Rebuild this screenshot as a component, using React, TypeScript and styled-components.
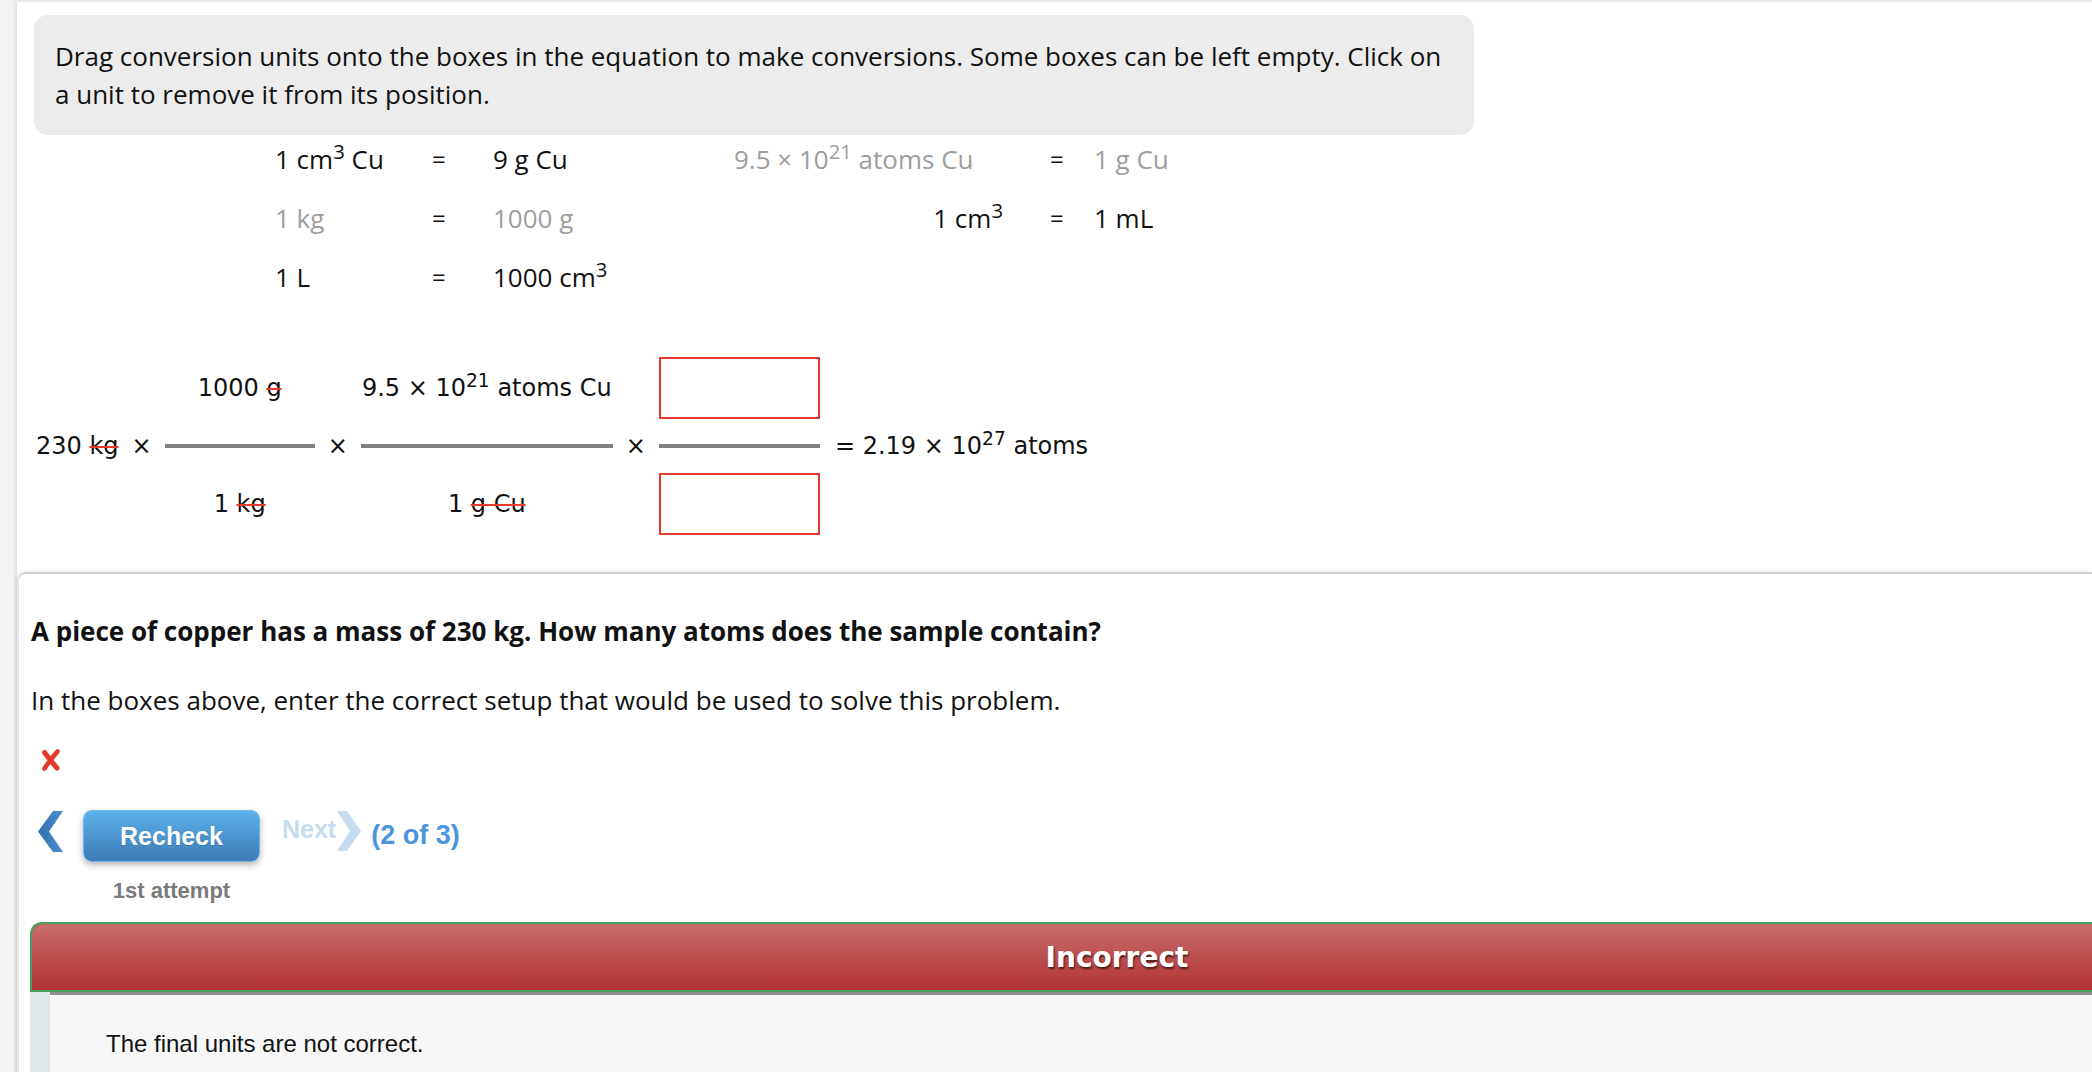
import React from "react";
import styled, { createGlobalStyle } from "styled-components";

const Global = createGlobalStyle`
  html, body { margin: 0; padding: 0; overflow: hidden; background: #f3f3f3; }
  #root { min-height: 100vh; }
`;

const Page = styled.div`
  display: flex;
  min-height: 1072px;
  background: #f3f3f3;
`;

const Gutter = styled.div`
  width: 17px;
  flex: none;
`;

const Main = styled.main`
  flex: 1;
  min-width: 0;
  display: flex;
  flex-direction: column;
  background: #fff;
  border-top: 2px solid #e6e6e6;
  box-shadow: -2px 0 3px rgba(0, 0, 0, 0.08);
`;

const Instructions = styled.div`
  box-sizing: border-box;
  width: 1440px;
  margin: 13px 0 0 17px;
  padding: 22px 21px;
  background: #ececec;
  border-radius: 14px;
  font: 400 26px/38px "Open Sans", sans-serif;
  color: #111;
`;

const UnitGrid = styled.div`
  display: grid;
  grid-template-columns: 157px 61px 241px 269px 47px 44px auto;
  grid-auto-rows: 40px;
  row-gap: 19px;
  margin: 4px 0 0 258px;
  font: 400 26px/40px "Open Sans", sans-serif;
  white-space: nowrap;
`;

const Unit = styled.span<{ $used?: boolean; $end?: boolean }>`
  color: ${(p) => (p.$used ? "#9d9d9d" : "#111")};
  justify-self: ${(p) => (p.$end ? "end" : "start")};
`;

const Eq = styled.span`
  color: #111;
  font-size: 24px;
`;

const Sup = styled.sup`
  font-size: 0.78em;
  line-height: 0;
  vertical-align: 0.5em;
`;

const Equation = styled.div`
  display: flex;
  align-items: center;
  gap: 13px;
  margin: 60px 0 0 19px;
  font: 400 24px "DejaVu Sans", Verdana, sans-serif;
  color: #111;
  white-space: nowrap;
`;

const Term = styled.span<{ $lead?: number }>`
  margin-left: ${(p) => p.$lead ?? 0}px;
`;

const Fraction = styled.div<{ $w: number }>`
  width: ${(p) => p.$w}px;
  flex: none;
  display: flex;
  flex-direction: column;
  align-items: center;
`;

const Slot = styled.div`
  height: 62px;
  width: 100%;
  line-height: 62px;
  text-align: center;
`;

const Bar = styled.div`
  align-self: stretch;
  height: 4px;
  margin: 25px 0;
  background: #808080;
`;

const DropBox = styled.div`
  box-sizing: border-box;
  width: 100%;
  height: 62px;
  border: 2px solid #e53b2c;
`;

const Strike = styled.span`
  text-decoration: line-through;
  text-decoration-color: #e8392b;
  text-decoration-thickness: 2px;
`;

const Panel = styled.section`
  flex: 1;
  margin: 37px 0 0 2px;
  background: #fff;
  border-top: 2px solid #d2d2d2;
  border-top-left-radius: 8px;
  box-shadow: -2px 0 4px rgba(0, 0, 0, 0.14);
  padding-top: 41px;
`;

const PanelBody = styled.div`
  padding-left: 12px;
  display: flex;
  flex-direction: column;
  align-items: flex-start;
`;

const Question = styled.p`
  margin: 0;
  font: 700 26px/33px "Open Sans", sans-serif;
  color: #111;
`;

const Prompt = styled.p`
  margin: 36px 0 0;
  font: 400 26px/33px "Open Sans", sans-serif;
  color: #111;
`;

const WrongMark = styled.svg`
  margin: 31px 0 0 9px;
  display: block;
`;

const NavRow = styled.div`
  display: flex;
  align-items: flex-start;
  margin-top: 38px;
  padding-left: 7px;
  font-family: "Liberation Sans", Arial, sans-serif;
  font-weight: 700;
`;

const Chevron = styled.svg<{ $gap?: number }>`
  display: block;
  flex: none;
  margin-top: 1px;
  margin-right: ${(p) => p.$gap ?? 0}px;
`;

const ButtonStack = styled.div`
  display: flex;
  flex-direction: column;
  align-items: center;
  width: 177px;
`;

const RecheckButton = styled.button`
  box-sizing: border-box;
  width: 177px;
  height: 52px;
  border: 1px solid #6db8ea;
  border-radius: 9px;
  background: linear-gradient(#5cb1ea, #3c7ab6);
  box-shadow: 0 3px 6px rgba(0, 0, 0, 0.3);
  color: #fff;
  font: 700 25px "Liberation Sans", Arial, sans-serif;
  text-shadow: 0 1px 1px rgba(0, 0, 0, 0.15);
  padding: 0;
  cursor: pointer;
`;

const Caption = styled.div`
  margin-top: 16px;
  font: 700 22px "Liberation Sans", Arial, sans-serif;
  color: #7a7a7a;
`;

const NextLabel = styled.span`
  margin: 5px 1px 0 22px;
  font-size: 25px;
  color: #c5dbef;
`;

const Counter = styled.span`
  margin: 10px 0 0 10px;
  font-size: 27px;
  color: #4b95dc;
`;

const Feedback = styled.div`
  width: 2172px;
  margin: 18px 0 0 11px;
`;

const FeedbackHeader = styled.div`
  box-sizing: border-box;
  height: 70px;
  display: flex;
  align-items: center;
  justify-content: center;
  border: 2px solid #4a9d58;
  border-right: none;
  border-top-left-radius: 12px;
  background: linear-gradient(#c76d6d, #b13232);
  color: #fff;
  font: 700 28px "DejaVu Sans", Verdana, sans-serif;
  text-shadow: 1px 2px 2px rgba(0, 0, 0, 0.6);
`;

const FeedbackBody = styled.div`
  display: flex;
  min-height: 120px;
`;

const FeedbackStrip = styled.div`
  width: 20px;
  flex: none;
  background: #dfe6ea;
`;

const FeedbackText = styled.div`
  flex: 1;
  background: #f7f7f7;
  border-top: 3px solid #8e8e8e;
  padding: 35px 0 0 56px;
  font: 400 24px "Liberation Sans", Arial, sans-serif;
  color: #111;
`;

export default function App() {
  return (
    <>
      <Global />
      <Page>
        <Gutter />
        <Main>
          <Instructions>
            Drag conversion units onto the boxes in the equation to make conversions. Some boxes can be left empty. Click on a
            unit to remove it from its position.
          </Instructions>

          <UnitGrid>
            <Unit>1 cm<Sup>3</Sup> Cu</Unit>
            <Eq>=</Eq>
            <Unit>9 g Cu</Unit>
            <Unit $used>9.5 × 10<Sup>21</Sup> atoms Cu</Unit>
            <span />
            <Eq>=</Eq>
            <Unit $used>1 g Cu</Unit>

            <Unit $used>1 kg</Unit>
            <Eq>=</Eq>
            <Unit $used>1000 g</Unit>
            <Unit $end>1 cm<Sup>3</Sup></Unit>
            <span />
            <Eq>=</Eq>
            <Unit>1 mL</Unit>

            <Unit>1 L</Unit>
            <Eq>=</Eq>
            <Unit>1000 cm<Sup>3</Sup></Unit>
          </UnitGrid>

          <Equation>
            <Term>
              230 <Strike>kg</Strike>
            </Term>
            <Term>×</Term>
            <Fraction $w={150}>
              <Slot>
                1000 <Strike>g</Strike>
              </Slot>
              <Bar />
              <Slot>
                1 <Strike>kg</Strike>
              </Slot>
            </Fraction>
            <Term>×</Term>
            <Fraction $w={252}>
              <Slot>
                9.5 × 10<Sup>21</Sup> atoms Cu
              </Slot>
              <Bar />
              <Slot>
                1 <Strike>g Cu</Strike>
              </Slot>
            </Fraction>
            <Term>×</Term>
            <Fraction $w={161}>
              <DropBox />
              <Bar />
              <DropBox />
            </Fraction>
            <Term $lead={2}>
              = 2.19 × 10<Sup>27</Sup> atoms
            </Term>
          </Equation>

          <Panel>
            <PanelBody>
              <Question>A piece of copper has a mass of 230 kg. How many atoms does the sample contain?</Question>
              <Prompt>In the boxes above, enter the correct setup that would be used to solve this problem.</Prompt>
              <WrongMark width="22" height="24" viewBox="0 0 22 24">
                <path d="M4.5 4.5 Q10 12 17 20" stroke="#e53a2a" strokeWidth="5" strokeLinecap="round" fill="none" />
                <path d="M17.5 3.5 Q10.5 11.5 4.5 20.5" stroke="#e53a2a" strokeWidth="4.6" strokeLinecap="round" fill="none" />
              </WrongMark>
              <NavRow>
                <Chevron $gap={20} width="25" height="41" viewBox="0 0 25 41">
                  <defs>
                    <linearGradient id="backG" x1="0" y1="0" x2="1" y2="0">
                      <stop offset="0" stopColor="#2f6eae" />
                      <stop offset="1" stopColor="#4b8fd0" />
                    </linearGradient>
                  </defs>
                  <polygon points="15,0 25,0 11,20.5 25,41 15,41 0,20.5" fill="url(#backG)" />
                </Chevron>
                <ButtonStack>
                  <RecheckButton>Recheck</RecheckButton>
                  <Caption>1st attempt</Caption>
                </ButtonStack>
                <NextLabel>Next</NextLabel>
                <Chevron width="24" height="40" viewBox="0 0 24 40">
                  <polygon points="0,0 10,0 24,20 10,40 0,40 13,20" fill="#c5dbef" />
                </Chevron>
                <Counter>(2 of 3)</Counter>
              </NavRow>
            </PanelBody>
            <Feedback>
              <FeedbackHeader>Incorrect</FeedbackHeader>
              <FeedbackBody>
                <FeedbackStrip />
                <FeedbackText>The final units are not correct.</FeedbackText>
              </FeedbackBody>
            </Feedback>
          </Panel>
        </Main>
      </Page>
    </>
  );
}
